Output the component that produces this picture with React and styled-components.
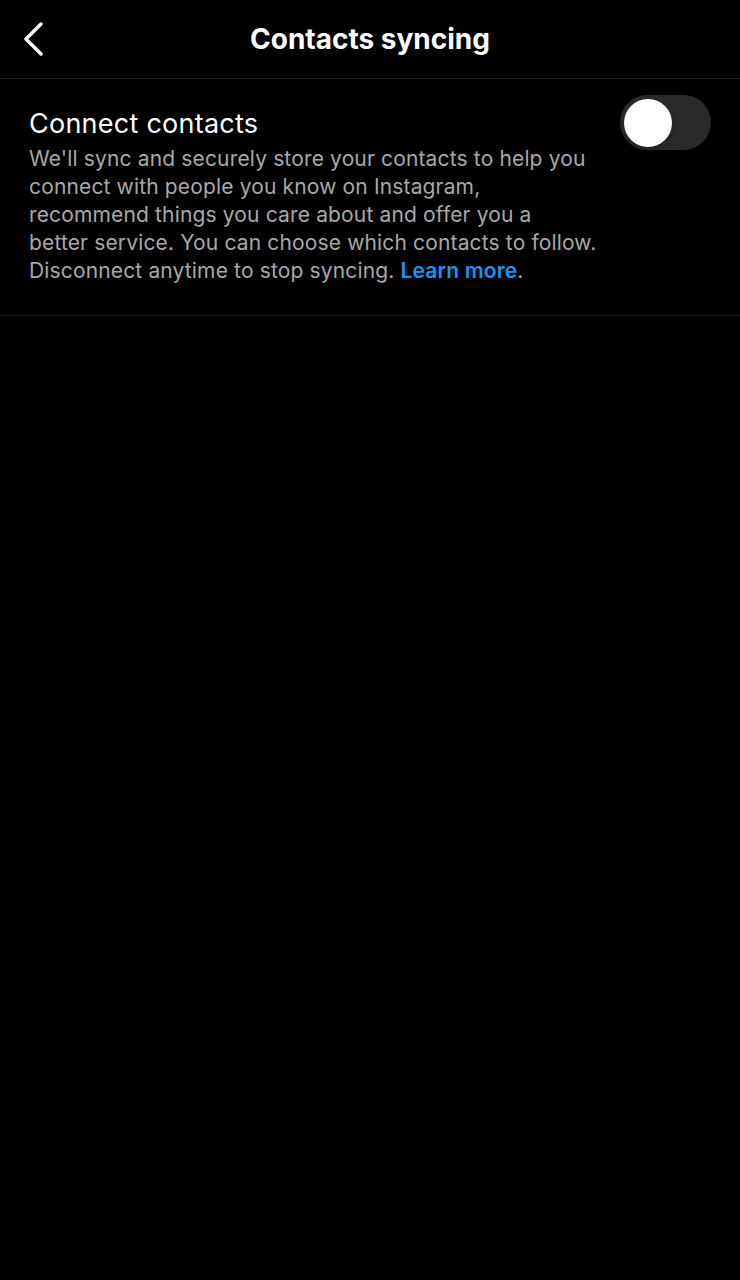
import React, { useState } from 'react';
import styled, { createGlobalStyle } from 'styled-components';

const GlobalStyle = createGlobalStyle`
  html, body {
    margin: 0;
    padding: 0;
    background: #000000;
  }
  body {
    font-family: Inter, "Noto Sans", sans-serif;
    -webkit-font-smoothing: antialiased;
  }
`

const Screen = styled.div`
  width: 740px;
  min-height: 1280px;
  background: #000000;
  color: #ffffff;
`

const Header = styled.div`
  height: 78px;
  display: grid;
  grid-template-columns: 78px 1fr 78px;
  align-items: center;
  border-bottom: 1px solid #1c1c1c;
`

const BackButton = styled.button`
  background: none;
  border: 0;
  padding: 0 0 0 21px;
  height: 100%;
  display: flex;
  align-items: center;
  cursor: pointer;
`

const Title = styled.h1`
  margin: 0;
  text-align: center;
  font-size: 28px;
  font-weight: 700;
  letter-spacing: 0;
  color: #ffffff;
`

const Section = styled.div`
  display: flex;
  justify-content: space-between;
  align-items: flex-start;
  padding: 16px 29px 30px 29px;
  border-bottom: 1px solid #141414;
`

const TextCol = styled.div`
  display: flex;
  flex-direction: column;
`

const RowTitle = styled.div`
  font-size: 27px;
  line-height: 36px;
  font-weight: 400;
  letter-spacing: 0.25px;
  color: #ffffff;
  margin-top: 11px;
`

const Description = styled.p`
  margin: 3px 0 0 0;
  font-size: 21px;
  line-height: 28px;
  letter-spacing: 0.15px;
  color: #a8a8a8;
`

const LearnMore = styled.a`
  color: #1c95f0;
  font-weight: 600;
  text-decoration: none;
`

const Toggle = styled.button`
  flex-shrink: 0;
  width: 91px;
  height: 55px;
  border-radius: 28px;
  border: 0;
  padding: 4px;
  background: ${p => (p.$on ? '#34c759' : '#2a2a2c')};
  display: flex;
  align-items: center;
  justify-content: ${p => (p.$on ? 'flex-end' : 'flex-start')};
  cursor: pointer;
`

const Knob = styled.span`
  width: 48px;
  height: 48px;
  border-radius: 50%;
  background: #ffffff;
  box-shadow: 0 2px 4px rgba(0, 0, 0, 0.3);
`

const App = () => {
  const [on, setOn] = useState(false);
  return (
    <Screen>
      <GlobalStyle />
      <Header>
        <BackButton aria-label="Back">
          <svg width="24" height="34" viewBox="0 0 24 34" fill="none">
            <path d="M20 2 L5 17 L20 32" stroke="#ffffff" strokeWidth="3.4" strokeLinecap="round" strokeLinejoin="round" />
          </svg>
        </BackButton>
        <Title>Contacts syncing</Title>
        <div />
      </Header>
      <Section>
        <TextCol>
          <RowTitle>Connect contacts</RowTitle>
          <Description>
            We'll sync and securely store your contacts to help you<br />
            connect with people you know on Instagram,<br />
            recommend things you care about and offer you a<br />
            better service. You can choose which contacts to follow.<br />
            Disconnect anytime to stop syncing. <LearnMore href="#">Learn more</LearnMore>.
          </Description>
        </TextCol>
        <Toggle $on={on} onClick={() => setOn(!on)} aria-label="Connect contacts">
          <Knob />
        </Toggle>
      </Section>
    </Screen>
  );
}

export default App;
